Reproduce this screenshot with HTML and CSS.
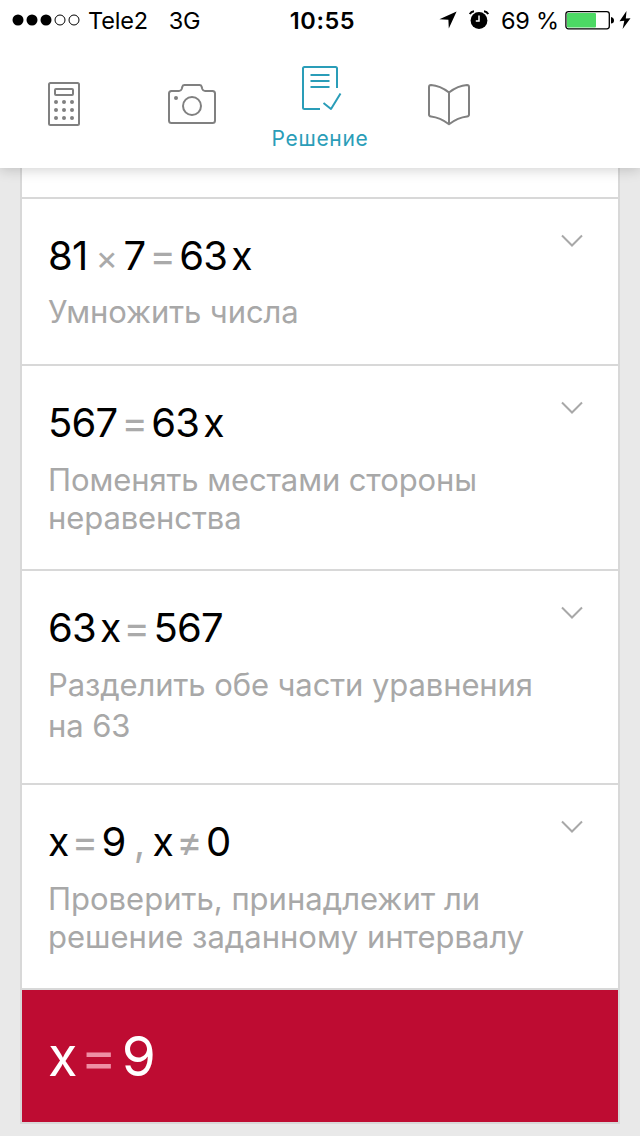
FILE: index.html
```html
<!DOCTYPE html>
<html lang="ru">
<head>
  <title>Решение</title>
  <meta charset="UTF-8">
  <meta name="viewport" content="width=device-width, initial-scale=1.0">
  <link rel="stylesheet" href="styles.css">
</head>
<body>
  <header class="header">
    <div class="status-bar">
      <div class="status-left">
        <svg class="signal" width="68" height="12" viewBox="0 0 68 12">
          <circle cx="6" cy="6" r="5.5"/>
          <circle cx="20" cy="6" r="5.5"/>
          <circle cx="34" cy="6" r="5.5"/>
          <circle class="empty" cx="48" cy="6" r="5"/>
          <circle class="empty" cx="62" cy="6" r="5"/>
        </svg>
        <span class="carrier">Tele2</span>
        <span class="network">3G</span>
      </div>
      <div class="clock">10:55</div>
      <div class="status-right">
        <svg class="location" width="18" height="18" viewBox="0 0 18 18">
          <path d="M17.6 .4 9.8 17.4 9.4 8.8 .4 8.2z"/>
        </svg>
        <svg class="alarm" width="20" height="20" viewBox="0 0 20 20">
          <circle cx="10" cy="10.5" r="8.4"/>
          <path class="bells" d="M.8 4.2Q2 1.6 5 1.3M15 1.3Q18 1.6 19.2 4.2"/>
          <path class="hands" d="M10 5.5V11H6.8"/>
        </svg>
        <span class="percent">69 %</span>
        <svg class="battery" width="50" height="20" viewBox="0 0 50 20">
          <rect class="shell" x=".9" y="1.6" width="43.4" height="17.2" rx="2.5"/>
          <rect class="level" x="2" y="3" width="29" height="14.5" rx="1"/>
          <path d="M46 7q3 .6 3 3.4T46 13.6z"/>
        </svg>
        <svg class="bolt" width="12" height="18" viewBox="0 0 12 18">
          <path d="M7.5 0 .5 10.2 5.3 9.8 3.6 18 11.5 7.2 6.8 7.6z"/>
        </svg>
      </div>
    </div>

    <nav class="tabs">
      <a class="tab">
        <svg width="32" height="44" viewBox="0 0 32 44">
          <rect x="1" y="1" width="30" height="42" rx="1.5"/>
          <rect x="7" y="7" width="18" height="6" rx="1"/>
          <g class="dots">
            <circle cx="8" cy="20" r="2"/><circle cx="16" cy="20" r="2"/><circle cx="24" cy="20" r="2"/>
            <circle cx="8" cy="28" r="2"/><circle cx="16" cy="28" r="2"/><circle cx="24" cy="28" r="2"/>
            <circle cx="8" cy="36" r="2"/><circle cx="16" cy="36" r="2"/><circle cx="24" cy="36" r="2"/>
          </g>
        </svg>
      </a>
      <a class="tab">
        <svg width="48" height="40" viewBox="0 0 48 40">
          <path d="M3.5 7H11q2 0 2.7-2L14.4 2.5Q14.8 1 16.5 1H31.5Q33.2 1 33.6 2.5L34.3 5Q35 7 37 7H44.5Q47 7 47 9.5V36.5Q47 39 44.5 39H3.5Q1 39 1 36.5V9.5Q1 7 3.5 7z"/>
          <circle cx="24" cy="22" r="9"/>
          <g class="dots"><circle cx="8" cy="14" r="2"/></g>
        </svg>
      </a>
      <a class="tab active">
        <svg width="40" height="45" viewBox="0 0 40 45">
          <path d="M18 43H2.5Q1 43 1 41.5V2.5Q1 1 2.5 1H33.5Q35 1 35 2.5V22"/>
          <path d="M8.5 9H27.5M8.5 15H27.5M8.5 21H27.5M21.5 37 29 43 38.5 27.5"/>
        </svg>
        <span class="tab-label">Решение</span>
      </a>
      <a class="tab book">
        <svg width="42" height="42" viewBox="0 0 42 42">
          <path d="M21 8.5Q12 1.5 3 1Q1 1 1 3V30.5Q1 32.3 3 32.5Q12 33.5 21 40.2Q30 33.5 39 32.5Q41 32.3 41 30.5V3Q41 1 39 1Q30 1.5 21 8.5V40"/>
        </svg>
      </a>
    </nav>
  </header>

  <main class="steps">
    <section class="step step-cut"></section>

    <section class="step">
      <div class="step-body">
        <div class="equation">
          <span>81</span><span class="op times">×</span><span>7</span><span class="op">=</span><span>63</span><span class="var factor">x</span>
        </div>
        <p class="hint">Умножить числа</p>
      </div>
      <svg class="chevron" width="24" height="14" viewBox="0 0 24 14"><path d="M2 1.5 12 11.5 22 1.5"/></svg>
    </section>

    <section class="step">
      <div class="step-body">
        <div class="equation">
          <span>567</span><span class="op">=</span><span>63</span><span class="var factor">x</span>
        </div>
        <p class="hint">Поменять местами стороны<br>неравенства</p>
      </div>
      <svg class="chevron" width="24" height="14" viewBox="0 0 24 14"><path d="M2 1.5 12 11.5 22 1.5"/></svg>
    </section>

    <section class="step tall">
      <div class="step-body">
        <div class="equation">
          <span>63</span><span class="var factor">x</span><span class="op">=</span><span>567</span>
        </div>
        <p class="hint">Разделить обе части уравнения<br>на 63</p>
      </div>
      <svg class="chevron" width="24" height="14" viewBox="0 0 24 14"><path d="M2 1.5 12 11.5 22 1.5"/></svg>
    </section>

    <section class="step">
      <div class="step-body">
        <div class="equation">
          <span class="var">x</span><span class="op">=</span><span>9</span><span class="op comma">,</span><span class="var">x</span><span class="op">≠</span><span>0</span>
        </div>
        <p class="hint wide">Проверить, принадлежит ли<br>решение заданному интервалу</p>
      </div>
      <svg class="chevron" width="24" height="14" viewBox="0 0 24 14"><path d="M2 1.5 12 11.5 22 1.5"/></svg>
    </section>

    <section class="result">
      <div class="equation">
        <span class="var">x</span><span class="op">=</span><span>9</span>
      </div>
    </section>
  </main>
</body>
</html>
```

FILE: styles.css
```css
* {
  box-sizing: border-box;
}
body {
  margin: 0;
  height: 1136px;
  overflow: hidden;
  background: #e9e9e9;
  font-family: Inter, "Liberation Sans", sans-serif;
  color: #000;
}
svg {
  display: block;
  flex: none;
}

/* Header */
.header {
  position: relative; /* keeps the shadow above the steps */
  z-index: 1;
  height: 168px;
  background: #fff;
  box-shadow: 0 2px 12px rgba(0,0,0,0.18);
}
.status-bar {
  display: grid;
  grid-template-columns: 1fr 70px 1fr;
  align-items: center;
  height: 40px;
  padding: 0 9px 0 12px;
  font-size: 23.5px;
  line-height: 39px;
  white-space: nowrap;
}
.status-left,
.status-right {
  display: flex;
  align-items: center;
}
.status-left span,
.clock,
.percent {
  padding-top: 1px;
}
.status-right {
  justify-content: flex-end;
}
.signal .empty {
  fill: none;
  stroke: #000;
}
.carrier {
  margin-left: 8px;
  letter-spacing: -0.2px;
}
.network {
  margin-left: 21px;
  letter-spacing: -0.3px;
}
.clock {
  padding-left: 2px;
  text-align: center;
  font-weight: 600;
  letter-spacing: 0.6px;
}
.alarm {
  margin-left: 12px;
}
.alarm .bells {
  fill: none;
  stroke: #000;
  stroke-width: 2;
}
.alarm .hands {
  fill: none;
  stroke: #fff;
  stroke-width: 1.5;
}
.percent {
  margin-left: 12px;
  letter-spacing: -0.2px;
}
.battery {
  margin-left: 6px;
}
.battery .shell {
  fill: #fff;
  stroke: #000;
  stroke-width: 1.3;
}
.battery .level {
  fill: #4cd964;
}
.bolt {
  margin-left: 4px;
}

/* Tabs */
.tabs {
  display: grid;
  grid-template-columns: repeat(5, 128px);
  height: 128px;
}
.tab {
  display: flex;
  flex-direction: column;
  align-items: center;
  justify-content: center;
  color: #808080;
}
.tab svg {
  fill: none;
  stroke: currentColor;
  stroke-width: 2;
  stroke-linejoin: round;
}
.tab .dots {
  fill: currentColor;
  stroke: none;
}
.tab.book {
  padding: 1px 0 0 2px;
}
.tab.active {
  justify-content: flex-start;
  padding-top: 26px;
  color: #2a9db8;
}
.tab.active svg {
  margin-left: 3px;
}
.tab-label {
  margin-top: 15px;
  font-size: 21px;
  line-height: 26px;
  letter-spacing: 0.7px;
}

/* Steps */
.steps {
  margin: 0 20px;
  border: 2px solid #d8d8d8;
  border-top: none;
  background: #fff;
}
.step {
  display: flex;
  justify-content: space-between;
  height: 205px;
  padding: 33px 34px 0 26px;
  border-bottom: 2px solid #d8d8d8;
}
.step-cut {
  height: 31px;
  padding: 0;
}
.step-cut + .step {
  height: 167px;
}
.step-cut + .step .hint {
  margin-top: 13px;
}
.step.tall {
  height: 214px;
}
.equation {
  display: flex;
  align-items: baseline;
  height: 48px;
  font-size: 40px;
  line-height: 48px;
  letter-spacing: -0.8px;
}
.op {
  width: 34px;
  text-align: center;
  color: #aaa;
}
.times {
  width: 36px;
  padding-left: 2px;
  font-size: 34px;
}
.comma {
  width: 27px;
}
.var {
  margin-right: -1px;
  font-size: 39px;
}
.factor {
  margin-left: 4px;
}
.hint {
  margin: 14px 0 0;
  font-size: 31px;
  line-height: 38px;
  letter-spacing: -0.1px;
  color: #a8a8a8;
  white-space: nowrap;
}
.hint.wide {
  letter-spacing: 0;
}
.tall .hint {
  margin-top: 12px;
  line-height: 41px;
}
.chevron {
  margin-top: 2px;
  fill: none;
  stroke: #a8a8a8;
  stroke-width: 2;
}

/* Result */
.result {
  height: 132px;
  padding: 36px 26px;
  background: #be0c32;
  color: #fff;
}
.result .equation {
  height: 60px;
  font-size: 55px;
  line-height: 60px;
}
.result .var {
  margin-right: -2px;
  font-size: 54px;
}
.result .op {
  width: 47px;
  color: #ef8fa5;
}
```
